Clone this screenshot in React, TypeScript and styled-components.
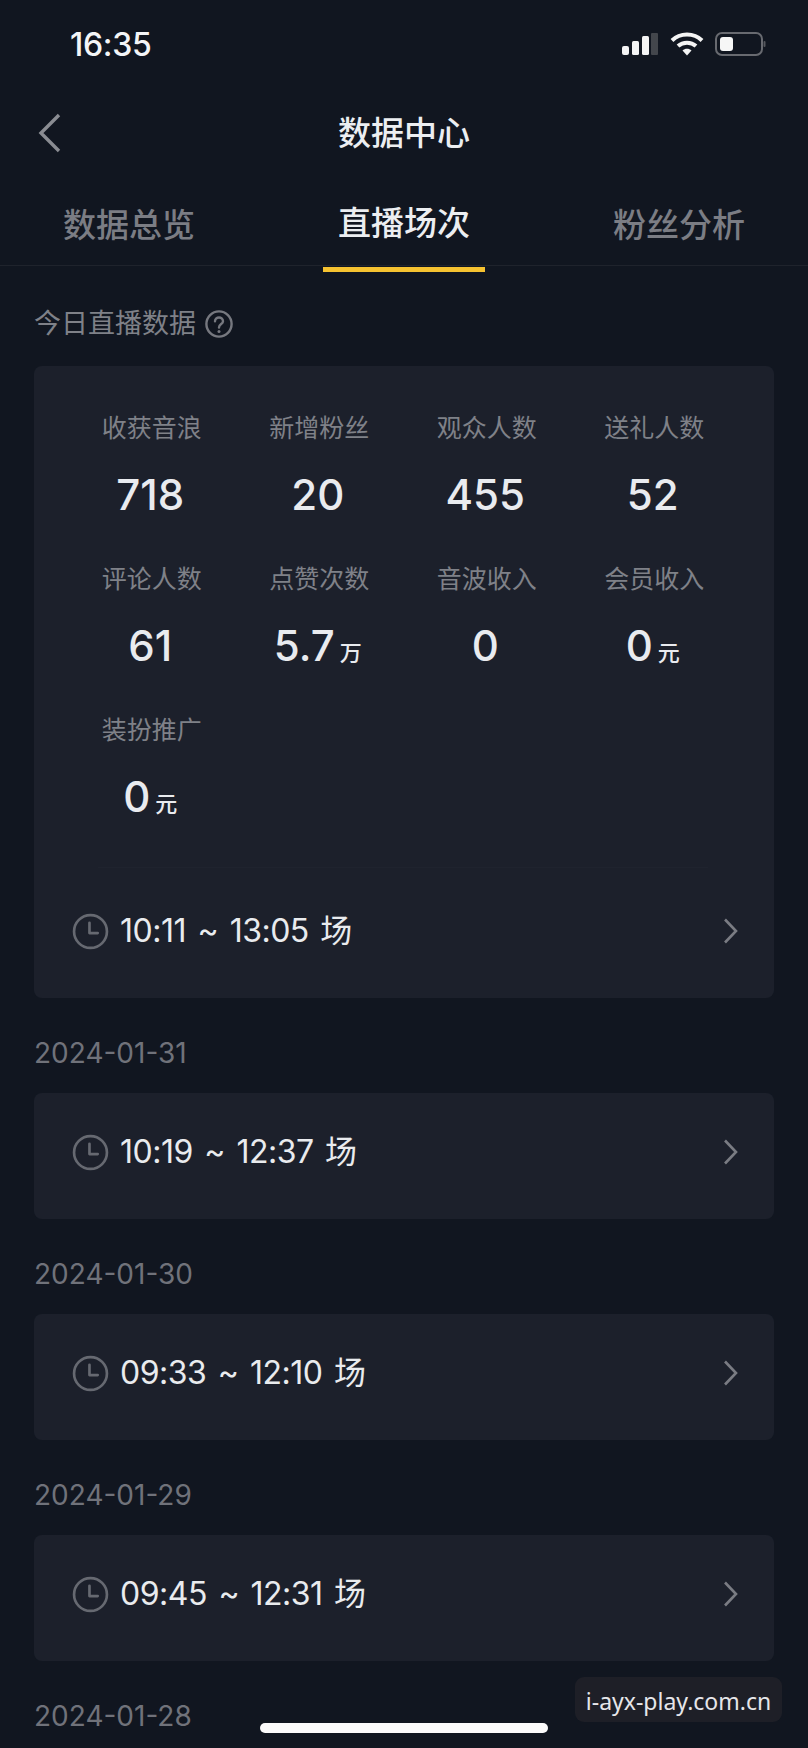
import React from "react";
import styled, { createGlobalStyle } from "styled-components";

const Global = createGlobalStyle`
  html, body { margin: 0; padding: 0; background: #111620; }
  * { box-sizing: border-box; }
`;

const FONT = `"Inter", "Noto Sans CJK SC", sans-serif`;

const Screen = styled.div`
  position: relative;
  width: 808px;
  height: 1748px;
  overflow: hidden;
  background: #111620;
  font-family: ${FONT};
`;

const StatusBar = styled.div`
  height: 88px;
  padding: 0 42px 0 70px;
  display: flex;
  align-items: center;
  justify-content: space-between;
`;

const Clock = styled.div`
  color: #f4f5f7;
  font-size: 32px;
  font-weight: 500;
  letter-spacing: -0.3px;
`;

const StatusIcons = styled.svg`
  display: block;
  width: 146px;
  height: 26px;
`;

const NavBar = styled.div`
  position: relative;
  height: 90px;
  padding-bottom: 4px;
  display: flex;
  align-items: center;
  justify-content: center;
`;

const BackIcon = styled.svg`
  position: absolute;
  left: 36px;
  top: 24px;
  width: 28px;
  height: 42px;
`;

const Title = styled.div`
  color: #eceef1;
  font-size: 33px;
  font-weight: 500;
`;

const Tabs = styled.div`
  display: grid;
  grid-template-columns: 258px 292px 258px;
  height: 88px;
  border-bottom: 1px solid #1f232c;
`;

const Tab = styled.div<{ $active?: boolean; $align: string }>`
  position: relative;
  display: flex;
  justify-content: ${(p) => p.$align};
  padding: 0 63px;
  padding-top: ${(p) => (p.$active ? "21px" : "23px")};
  color: ${(p) => (p.$active ? "#eceef1" : "#7b7d84")};
  font-size: 33px;
  font-weight: 500;
  line-height: 48px;
`;

const TabBar = styled.span`
  position: absolute;
  left: 65px;
  bottom: -7px;
  width: 162px;
  height: 5px;
  background: #f6c230;
`;

const Content = styled.div`
  padding: 0 34px;
`;

const SectionHead = styled.div`
  height: 100px;
  padding-top: 39px;
  display: flex;
  align-items: flex-start;
  gap: 9px;
  color: #7f8188;
  font-size: 27px;
  line-height: 38px;
`;

const HelpIcon = styled.svg`
  width: 28px;
  height: 28px;
  margin-top: 5px;
`;

const Card = styled.div`
  background: #1c202b;
  border-radius: 8px;
`;

const StatsGrid = styled.div`
  display: grid;
  grid-template-columns: repeat(4, 167.5px);
  grid-auto-rows: 151px;
  padding: 44px 0 0 34px;
  height: 501px;
`;

const Divider = styled.div`
  height: 1px;
  margin: 0 66px 0 64px;
  background: #1f232e;
`;

const Stat = styled.div`
  display: flex;
  flex-direction: column;
  align-items: center;
`;

const StatLabel = styled.div`
  color: #7f8188;
  font-size: 25px;
  line-height: 36px;
`;

const StatValue = styled.div`
  margin-top: 23px;
  margin-right: 3px;
  color: #e9ebef;
  font-size: 42px;
  font-weight: 500;
  line-height: 52px;
  display: flex;
  align-items: baseline;
`;

const Unit = styled.span`
  margin-left: 5px;
  font-size: 22px;
  font-weight: 500;
`;

const SessionRow = styled.div<{ $tall?: boolean }>`
  height: ${(p) => (p.$tall ? "130px" : "126px")};
  padding: ${(p) => (p.$tall ? "0 34px 4px 38px" : "0 34px 8px 38px")};
  display: flex;
  align-items: center;
`;

const ClockIcon = styled.svg`
  width: 37px;
  height: 37px;
  flex: none;
`;

const SessionText = styled.div`
  margin-left: 11px;
  flex: 1;
  color: #e9ebee;
  font-size: 32px;
  line-height: 44px;
  letter-spacing: -0.5px;
  word-spacing: 3px;
`;

const Chevron = styled.svg`
  width: 18px;
  height: 26px;
  flex: none;
`;

const DateLabel = styled.div`
  height: 95px;
  padding-top: 35px;
  color: #70727a;
  font-size: 28px;
  line-height: 40px;
`;

const Watermark = styled.div`
  position: absolute;
  left: 575px;
  top: 1677px;
  width: 207px;
  height: 45px;
  border-radius: 9px;
  background: #1e1f27;
  color: #e6e6ea;
  font-family: "Noto Sans", sans-serif;
  font-size: 23px;
  line-height: 48px;
  text-align: center;
`;

const HomeBar = styled.div`
  position: absolute;
  left: 260px;
  top: 1723px;
  width: 288px;
  height: 10px;
  border-radius: 5px;
  background: #fbfbfb;
`;

const stats = [
  { label: "收获音浪", value: "718" },
  { label: "新增粉丝", value: "20" },
  { label: "观众人数", value: "455" },
  { label: "送礼人数", value: "52" },
  { label: "评论人数", value: "61" },
  { label: "点赞次数", value: "5.7", unit: "万" },
  { label: "音波收入", value: "0" },
  { label: "会员收入", value: "0", unit: "元" },
  { label: "装扮推广", value: "0", unit: "元" },
];

const sessions = [
  { date: "2024-01-31", time: "10:19 ~ 12:37 场" },
  { date: "2024-01-30", time: "09:33 ~ 12:10 场" },
  { date: "2024-01-29", time: "09:45 ~ 12:31 场" },
];

const Row = ({ time, tall }: { time: string; tall?: boolean }) => (
  <SessionRow $tall={tall}>
    <ClockIcon viewBox="0 0 36 36" fill="none" stroke="#666971" strokeWidth="2.6">
      <circle cx="18" cy="18" r="16" />
      <path d="M17 9.5V19.5H25" strokeLinecap="round" strokeLinejoin="round" />
    </ClockIcon>
    <SessionText>{time}</SessionText>
    <Chevron viewBox="0 0 18 26" fill="none" stroke="#7a7c83" strokeWidth="2.6">
      <path d="M3 1.5L14 13L3 24.5" />
    </Chevron>
  </SessionRow>
);

export default function App() {
  return (
    <Screen>
      <Global />
      <StatusBar>
        <Clock>16:35</Clock>
        <StatusIcons viewBox="0 0 146 26">
          <rect x="2" y="15" width="7" height="9" rx="2" fill="#f4f4f4" />
          <rect x="12" y="10" width="7" height="14" rx="1.5" fill="#f4f4f4" />
          <rect x="22" y="5" width="7" height="19" rx="1.5" fill="#f4f4f4" />
          <rect x="31" y="2" width="7" height="22" rx="1" fill="#43464c" />
          <path d="M52 9.5C60 1.5 74 1.5 82 9.5" fill="none" stroke="#f4f4f4" strokeWidth="4" />
          <path d="M58 15C63 10.5 71 10.5 76 15" fill="none" stroke="#f4f4f4" strokeWidth="4" />
          <path d="M62.5 19.5C65 17 69 17 71.5 19.5L67 24.5Z" fill="#f4f4f4" />
          <rect x="96" y="2" width="46" height="22" rx="6" fill="none" stroke="#686a70" strokeWidth="2" />
          <rect x="100" y="6" width="13" height="14" rx="3" fill="#f6f6f6" />
          <rect x="143.5" y="10" width="2" height="6" rx="1" fill="#55575d" />
        </StatusIcons>
      </StatusBar>
      <NavBar>
        <BackIcon viewBox="0 0 28 42" fill="none" stroke="#8a8c92" strokeWidth="3.4">
          <path d="M23 3L5 21L23 39" />
        </BackIcon>
        <Title>数据中心</Title>
      </NavBar>
      <Tabs>
        <Tab $align="flex-start">数据总览</Tab>
        <Tab $active $align="center">
          直播场次
          <TabBar />
        </Tab>
        <Tab $align="flex-end">粉丝分析</Tab>
      </Tabs>
      <Content>
        <SectionHead>
          今日直播数据
          <HelpIcon viewBox="0 0 28 28" fill="none" stroke="#76787f" strokeWidth="2.4">
            <circle cx="14" cy="14" r="12.6" />
            <path d="M10 11.2C10 6.2 18 6.2 18 11.2C18 14.2 14 14 14 17.6" strokeLinecap="round" />
            <circle cx="14" cy="21.4" r="1.5" fill="#76787f" stroke="none" />
          </HelpIcon>
        </SectionHead>
        <Card>
          <StatsGrid>
            {stats.map((s) => (
              <Stat key={s.label}>
                <StatLabel>{s.label}</StatLabel>
                <StatValue>
                  {s.value}
                  {s.unit && <Unit>{s.unit}</Unit>}
                </StatValue>
              </Stat>
            ))}
          </StatsGrid>
          <Divider />
          <Row time="10:11 ~ 13:05 场" tall />
        </Card>
        {sessions.map((s) => (
          <React.Fragment key={s.date}>
            <DateLabel>{s.date}</DateLabel>
            <Card>
              <Row time={s.time} />
            </Card>
          </React.Fragment>
        ))}
        <DateLabel>2024-01-28</DateLabel>
      </Content>
      <Watermark>i-ayx-play.com.cn</Watermark>
      <HomeBar />
    </Screen>
  );
}
